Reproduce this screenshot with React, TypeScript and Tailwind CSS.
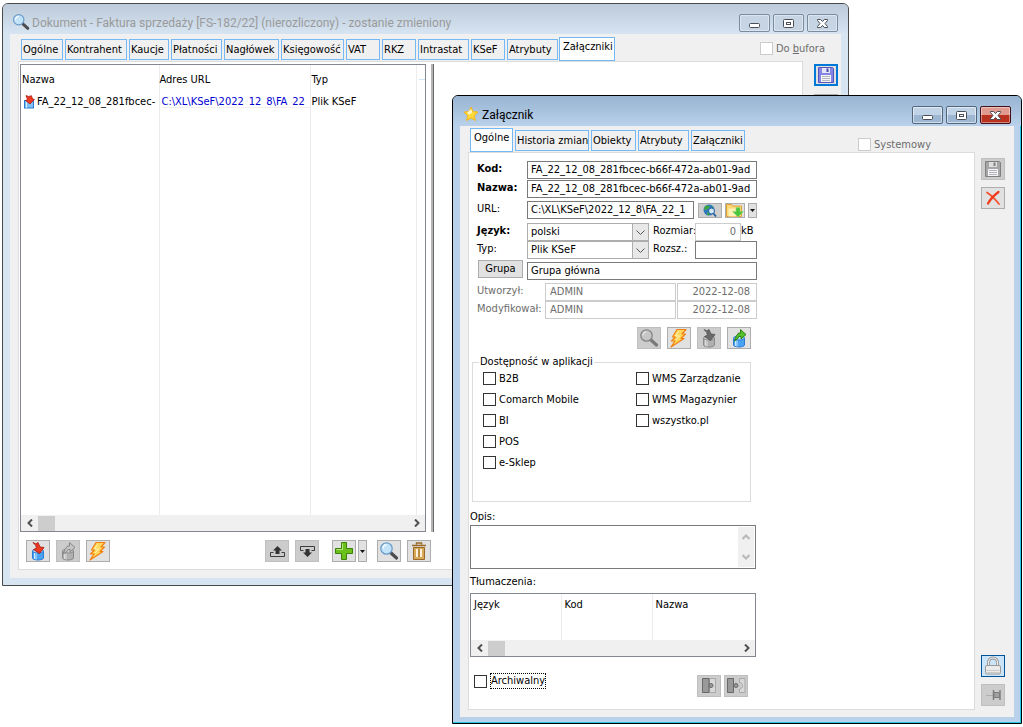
import { useState } from "react";
import type { ReactNode } from "react";
import clsx from "clsx";

interface TabDef {
  label: string;
  width: string;
}

const documentTabs: TabDef[] = [
  { label: "Ogólne", width: "w-[42px]" },
  { label: "Kontrahent", width: "w-[62px]" },
  { label: "Kaucje", width: "w-[40px]" },
  { label: "Płatności", width: "w-[51px]" },
  { label: "Nagłówek", width: "w-[55px]" },
  { label: "Księgowość", width: "w-[63px]" },
  { label: "VAT", width: "w-[34px]" },
  { label: "RKZ", width: "w-[34px]" },
  { label: "Intrastat", width: "w-[51px]" },
  { label: "KSeF", width: "w-[34px]" },
  { label: "Atrybuty", width: "w-[51px]" },
  { label: "Załączniki", width: "w-[56px]" },
];

const attachmentTabs: TabDef[] = [
  { label: "Ogólne", width: "w-[43px]" },
  { label: "Historia zmian", width: "w-[74px]" },
  { label: "Obiekty", width: "w-[45px]" },
  { label: "Atrybuty", width: "w-[51px]" },
  { label: "Załączniki", width: "w-[54px]" },
];

const appsLeft = ["B2B", "Comarch Mobile", "BI", "POS", "e-Sklep"];
const appsRight = ["WMS Zarządzanie", "WMS Magazynier", "wszystko.pl"];

export default function App() {
  return (
    <main className="grid min-h-screen bg-white font-['DejaVu_Sans_Condensed','DejaVu_Sans',sans-serif] text-[11px] leading-[14px] text-black">
      <DocumentWindow />
      <AttachmentWindow />
    </main>
  );
}

/* ---------- Windows ---------- */

function DocumentWindow() {
  const [tab, setTab] = useState("Załączniki");

  return (
    <section className="col-start-1 row-start-1 mt-[3px] mr-[174px] mb-[141px] ml-[2px] flex flex-col rounded-t-md border border-[#4a4a4a] bg-[#d7e4f2] px-[7px] pb-[7px]">
      <TitleBar
        icon={<MagnifierIcon className="size-5 shrink-0" />}
        title="Dokument - Faktura sprzedaży [FS-182/22] (nierozliczony) - zostanie zmieniony"
      />
      <div className="flex flex-1 flex-col bg-[#f0f0f0]">
        <div className="flex h-[27px] justify-between pl-[11px]">
          <Tabs tabs={documentTabs} active={tab} onChange={setTab} />
          <div className="mt-2 mr-4">
            <Check label={<>Do <u>b</u>ufora</>} disabled />
          </div>
        </div>

        <div className="mb-2 ml-2 flex flex-1">
          <div className="flex flex-1 flex-col border border-[#dcdcdc] bg-white pt-[2px] pb-[7px] pl-px">
            <div className="flex flex-1 gap-[5px]">
              <div className="flex w-[406px] flex-col border border-[#828790]">
                <FileTable />
                <ScrollBar />
              </div>
              <div className="w-[3px] border-r border-[#696969] bg-[#b4b4b4]" />
            </div>

            <div className="mt-2 flex w-[411px] pl-1.5">
              <div className="flex gap-1.5">
                <ToolButton title="Importuj"><DbInIcon /></ToolButton>
                <ToolButton title="Eksportuj" disabled><DbOutIcon muted /></ToolButton>
                <ToolButton title="Uruchom"><BoltIcon /></ToolButton>
              </div>
              <div className="ml-auto flex gap-1.5">
                <ToolButton title="W górę" disabled><TrayUpIcon /></ToolButton>
                <ToolButton title="W dół" disabled><TrayDownIcon /></ToolButton>
              </div>
              <div className="mr-[10px] ml-[13px] flex gap-0.5">
                <ToolButton title="Dodaj"><PlusIcon /></ToolButton>
                <DropButton title="Więcej opcji dodawania" />
              </div>
              <div className="flex gap-1.5">
                <ToolButton title="Podgląd"><MagnifierIcon /></ToolButton>
                <ToolButton title="Usuń"><TrashIcon /></ToolButton>
              </div>
            </div>
          </div>

          <div className="flex flex-col gap-2 pt-[3px] pr-[3px] pl-[11px]">
            <button title="Zapisz" className="flex h-[22px] w-6 items-center justify-center bg-[#e1e1e1] ring-2 ring-[#0078d7] ring-inset">
              <FloppyIcon />
            </button>
            <button title="Zamknij" className="h-[22px] w-6 border border-[#adadad] bg-[#cccccc]" />
          </div>
        </div>
      </div>
    </section>
  );
}

function AttachmentWindow() {
  const [tab, setTab] = useState("Ogólne");

  return (
    <section className="z-10 col-start-1 row-start-1 mt-[95px] mr-px mb-[3px] ml-[452px] flex flex-col rounded-t-md border border-black bg-[#b9d1ea] px-[7px] pb-[6px] shadow-[inset_-1px_-1px_0_#26c9ea]">
      <TitleBar icon={<StarIcon />} title="Załącznik" focused />
      <div className="flex flex-1 flex-col bg-[#f0f0f0]">
        <div className="flex h-[26px] justify-between pl-[11px]">
          <div className="-mt-px">
            <Tabs tabs={attachmentTabs} active={tab} onChange={setTab} />
          </div>
          <div className="mt-3 mr-[83px]">
            <Check label="Systemowy" disabled />
          </div>
        </div>

        <div className="mb-[7px] ml-2 flex flex-1">
          <div className="flex-1 border border-[#dcdcdc] bg-white pt-2 pb-[11px]">
            <AttachmentForm />
          </div>
          <div className="flex flex-col gap-[7px] pt-1.5 pr-[9px] pb-1 pl-1.5">
            <ToolButton title="Zapisz" disabled><FloppyIcon muted /></ToolButton>
            <ToolButton title="Anuluj"><CrossIcon /></ToolButton>
            <button title="Blokada" className="mt-auto h-[22px] w-6 border border-[#005499] bg-[#cce4f7]">
              <LockIcon />
            </button>
            <ToolButton title="Przypnij" disabled><PinIcon /></ToolButton>
          </div>
        </div>
      </div>
    </section>
  );
}

function AttachmentForm() {
  return (
    <form className="w-[288px]" onSubmit={(e) => e.preventDefault()}>
      <div className="pl-2">
        <Row id="kod" label="Kod:" bold>
          <Field id="kod" value="FA_22_12_08_281fbcec-b66f-472a-ab01-9ad" />
        </Row>
        <div className="mt-px">
          <Row id="nazwa" label="Nazwa:" bold>
            <Field id="nazwa" value="FA_22_12_08_281fbcec-b66f-472a-ab01-9ad" />
          </Row>
        </div>
        <div className="mt-[3px]">
          <Row id="url" label="URL:">
            <Field id="url" value="C:\XL\KSeF\2022_12_8\FA_22_1" />
            <div className="flex shrink-0 items-center gap-[3px] pl-1">
              <button type="button" title="Otwórz adres" className="h-[15px] w-6 border border-[#adadad] bg-[#cfcfcf]"><GlobeIcon /></button>
              <button type="button" title="Wybierz plik" className="h-[15px] w-5 border border-[#adadad] bg-[#e1e1e1]"><FolderIcon /></button>
              <button type="button" title="Opcje pliku" className="flex h-[15px] w-[9px] items-center justify-center border border-[#adadad] bg-[#e1e1e1]"><Caret /></button>
            </div>
          </Row>
        </div>

        <div className="mt-1 flex">
          <div className="w-[172px]">
            <Row id="jezyk" label="Język:" bold><Select id="jezyk" value="polski" /></Row>
            <Row id="typ" label="Typ:"><Select id="typ" value="Plik KSeF" /></Row>
          </div>
          <div className="flex-1 pl-1 leading-[16px]">
            <div className="flex h-[18px]">
              <label htmlFor="rozmiar" className="w-[42px]">Rozmiar:</label>
              <input id="rozmiar" disabled defaultValue="0" className="w-[46px] min-w-0 border border-[#cccccc] bg-white px-1 text-right text-[#6d6d6d]" />
              <span>kB</span>
            </div>
            <div className="flex h-[18px]">
              <label htmlFor="rozsz" className="w-[42px]">Rozsz.:</label>
              <input id="rozsz" className="w-[62px] min-w-0 border border-[#7a7a7a] bg-white px-1" />
            </div>
          </div>
        </div>

        <div className="mt-[3px] flex h-[18px]">
          <div className="w-[50px] shrink-0 pl-px">
            <button type="button" className="-mt-[3px] h-[18px] w-[45px] border border-[#adadad] bg-[#e1e1e1]">Grupa</button>
          </div>
          <input aria-label="Grupa" defaultValue="Grupa główna" className="min-w-0 flex-1 border border-[#7a7a7a] bg-white px-[3px]" />
        </div>

        <div className="mt-[3px]">
          <AuditRow id="utworzyl" label="Utworzył:" user="ADMIN" date="2022-12-08" />
          <AuditRow id="modyfikowal" label="Modyfikował:" user="ADMIN" date="2022-12-08" />
        </div>

        <div className="mt-2 mr-1.5 flex justify-end gap-1.5">
          <ToolButton title="Podgląd" disabled><MagnifierIcon muted /></ToolButton>
          <ToolButton title="Uruchom"><BoltIcon /></ToolButton>
          <ToolButton title="Importuj" disabled><DbInIcon muted /></ToolButton>
          <ToolButton title="Eksportuj"><DbOutIcon /></ToolButton>
        </div>
      </div>

      <fieldset className="mt-1.5 mr-1.5 ml-[3px] flex h-[147px] border border-[#dcdcdc] pt-[3px] pl-[10px]">
        <legend className="-ml-1 px-px whitespace-nowrap">Dostępność w aplikacji</legend>
        <div className="flex w-[153px] flex-col gap-2">
          {appsLeft.map((app) => <Check key={app} label={app} />)}
        </div>
        <div className="flex flex-col gap-2">
          {appsRight.map((app) => <Check key={app} label={app} />)}
        </div>
      </fieldset>

      <div className="pl-px">
        <label htmlFor="opis" className="mt-2 block">Opis:</label>
        <div className="mt-px flex h-[44px] w-[286px] border border-[#7a7a7a] p-px">
          <textarea id="opis" className="min-w-0 flex-1 resize-none overflow-hidden px-1 outline-none" />
          <div className="flex w-4 flex-col items-center justify-between bg-[#f0f0f0] py-1.5">
            <Chevron dir="up" muted />
            <Chevron dir="down" muted />
          </div>
        </div>

        <p className="mt-1.5">Tłumaczenia:</p>
        <div className="mt-1 flex h-16 w-[286px] flex-col border border-[#828790]">
          <table className="h-[47px] w-full table-fixed text-left">
            <thead>
              <tr>
                <th className="w-[90px] border-r border-[#ececec] px-[3px] pt-1 align-top font-normal">Język</th>
                <th className="w-[91px] border-r border-[#ececec] px-[3px] pt-1 align-top font-normal">Kod</th>
                <th className="px-[3px] pt-1 align-top font-normal">Nazwa</th>
              </tr>
            </thead>
          </table>
          <ScrollBar />
        </div>

        <div className="mt-4 flex items-start justify-between pr-[9px] pl-1">
          <label className="flex items-center gap-[3px]">
            <input type="checkbox" className="size-[13px] appearance-none border border-[#333333] bg-white checked:bg-[#333333]" />
            <span className="border border-dotted border-black">Archiwalny</span>
          </label>
          <div className="mt-0.5 flex gap-[3px]">
            <ToolButton title="Połącz" disabled><PuzzleIcon /></ToolButton>
            <ToolButton title="Rozłącz" disabled><PuzzleIcon apart /></ToolButton>
          </div>
        </div>
      </div>
    </form>
  );
}

function FileTable() {
  return (
    <div className="flex flex-1 flex-col">
      <table className="h-full w-full flex-1 table-fixed text-left">
        <thead>
          <tr className="h-[29px]">
            <th className="w-[138px] border-r border-[#ececec] pl-px font-normal">Nazwa</th>
            <th className="w-[151px] border-r border-[#ececec] font-normal">Adres URL</th>
            <th className="w-[106px] border-r border-[#ececec] pl-px font-normal">Typ</th>
            <th><div className="ml-0.5 h-px bg-[#cce8f8]" /></th>
          </tr>
        </thead>
        <tbody>
          <tr className="h-[16px]">
            <td className="border-r border-[#ececec]">
              <div className="flex items-center gap-0.5 pl-0.5 whitespace-nowrap">
                <SmallDbIcon />
                FA_22_12_08_281fbcec-
              </div>
            </td>
            <td className="border-r border-[#ececec] pl-0.5 align-top">
              <div className="h-[14px] overflow-hidden border-b border-[#f0f0f0] leading-[16px] text-[#0000d0]">
                <a href="#plik" className="block whitespace-nowrap">C:\XL\KSeF\2022_12_8\FA_22</a>
              </div>
            </td>
            <td className="border-r border-[#ececec] pl-px">Plik KSeF</td>
            <td />
          </tr>
          <tr>
            <td className="border-r border-[#ececec]" />
            <td className="border-r border-[#ececec]" />
            <td className="border-r border-[#ececec]" />
            <td />
          </tr>
        </tbody>
      </table>
    </div>
  );
}

/* ---------- Shared pieces ---------- */

function TitleBar({ icon, title, focused }: { icon: ReactNode; title: string; focused?: boolean }) {
  return (
    <header
      className={clsx(
        "-mx-[7px] flex h-[30px] items-center rounded-t-[5px] bg-linear-to-b px-[10px]",
        focused ? "from-[#98b4d2] to-[#b9d1ea]" : "from-[#bccad9] to-[#d7e4f2]"
      )}
    >
      <div className="mt-1.5 flex size-4 items-center justify-center">{icon}</div>
      <h1
        className={clsx(
          "mt-2 ml-[3px] flex-1 font-['Roboto','Open_Sans',sans-serif] text-[12px] whitespace-nowrap",
          focused ? "text-black" : "text-[#9a9a9a]"
        )}
      >
        {title}
      </h1>
      <div className="mt-2 flex gap-[3px]">
        <WindowButton kind="min" focused={focused} />
        <WindowButton kind="max" focused={focused} />
        <WindowButton kind="close" focused={focused} />
      </div>
    </header>
  );
}

function WindowButton({ kind, focused }: { kind: "min" | "max" | "close"; focused?: boolean }) {
  const red = focused && kind === "close";
  return (
    <button
      title={kind === "min" ? "Minimalizuj" : kind === "max" ? "Maksymalizuj" : "Zamknij"}
      className={clsx(
        "flex h-[18px] w-[31px] items-center justify-center rounded-[2px] border inset-ring",
        red && "border-[#43101a] bg-linear-to-b from-[#e09a90] from-50% to-[#b8321f] to-50% inset-ring-[#ffffff66]",
        !red && focused && "border-[#52667e] bg-linear-to-b from-[#c1d3e7] from-50% to-[#9db7d3] to-50% inset-ring-[#ffffff88]",
        !red && !focused && "border-[#7b8ba0] bg-[#c6d4e3] inset-ring-[#ffffff66]"
      )}
    >
      <svg viewBox="0 0 13 11" className="h-[11px] w-[13px]" fill="#fff" stroke="#4a4f57">
        {kind === "min" && <rect x="1.5" y="5.5" width="10" height="4" rx="1" />}
        {kind === "max" && (
          <>
            <rect x="1.5" y="1.5" width="10" height="8" rx="1" />
            <rect x="4.5" y="4.5" width="4" height="2" />
          </>
        )}
        {kind === "close" && (
          <path d="M1.5 1.5h3.2L6.5 3.6 8.3 1.5h3.2v1L9 5.5l2.5 3v1H8.3L6.5 7.4 4.7 9.5H1.5v-1L4 5.5l-2.5-3z" />
        )}
      </svg>
    </button>
  );
}

function Tabs({ tabs, active, onChange }: { tabs: TabDef[]; active: string; onChange: (label: string) => void }) {
  return (
    <nav className="flex gap-0.5 whitespace-nowrap">
      {tabs.map((tab) => (
        <button
          key={tab.label}
          onClick={() => onChange(tab.label)}
          className={clsx(
            "shrink-0 border border-[#74b9f6] text-left",
            tab.width,
            tab.label === active ? "mt-[3px] -ml-px h-6 bg-white pb-1 pl-[3px]" : "mt-[5px] h-[21px] bg-[#f0f0f0] pl-px"
          )}
        >
          {tab.label}
        </button>
      ))}
    </nav>
  );
}

function Check({ label, disabled }: { label: ReactNode; disabled?: boolean }) {
  return (
    <label className={clsx("flex h-[13px] items-center gap-[3px] whitespace-nowrap", disabled && "text-[#6d6d6d]")}>
      <input
        type="checkbox"
        disabled={disabled}
        className="size-[13px] appearance-none border border-[#333333] bg-white checked:bg-[#333333] disabled:border-[#cccccc]"
      />
      <span>{label}</span>
    </label>
  );
}

function Row({ id, label, bold, children }: { id: string; label: string; bold?: boolean; children: ReactNode }) {
  return (
    <div className="flex h-[18px]">
      <label htmlFor={id} className={clsx("w-[50px] shrink-0 leading-[16px]", bold && "font-bold")}>{label}</label>
      {children}
    </div>
  );
}

function Field({ id, value }: { id: string; value: string }) {
  return <input id={id} defaultValue={value} className="min-w-0 flex-1 border border-[#7a7a7a] bg-white px-[3px]" />;
}

function Select({ id, value }: { id: string; value: string }) {
  return (
    <div className="relative flex-1">
      <select id={id} className="h-[18px] w-full appearance-none border border-[#adadad] bg-white pl-[3px]">
        <option>{value}</option>
      </select>
      <div className="pointer-events-none absolute inset-y-0 right-0 flex w-[17px] items-center justify-center border border-[#adadad] bg-[#e8e8e8]">
        <svg viewBox="0 0 9 5" className="h-[5px] w-[9px]" fill="none" stroke="#555">
          <path d="M.5.5l4 4 4-4" />
        </svg>
      </div>
    </div>
  );
}

function AuditRow({ id, label, user, date }: { id: string; label: string; user: string; date: string }) {
  return (
    <div className="flex h-[18px] gap-px text-[#6d6d6d]">
      <label htmlFor={id} className="w-[67px] shrink-0 leading-[16px] whitespace-nowrap">{label}</label>
      <input id={id} disabled defaultValue={user} className="min-w-0 flex-1 border border-[#cccccc] bg-white px-1" />
      <input aria-label={`${label} data`} disabled defaultValue={date} className="w-[80px] border border-[#cccccc] bg-white px-1.5 text-right" />
    </div>
  );
}

function ToolButton({ title, disabled, children }: { title: string; disabled?: boolean; children: ReactNode }) {
  return (
    <button
      type="button"
      title={title}
      disabled={disabled}
      className="h-[22px] w-6 border border-[#adadad] bg-[#e1e1e1] disabled:border-[#bfbfbf] disabled:bg-[#cccccc]"
    >
      {children}
    </button>
  );
}

function DropButton({ title }: { title: string }) {
  return (
    <button type="button" title={title} className="flex h-[22px] w-[9px] items-center justify-center border border-[#adadad] bg-[#e1e1e1]">
      <Caret />
    </button>
  );
}

function ScrollBar() {
  return (
    <div className="flex h-4 items-center bg-[#f0f0f0]">
      <div className="flex w-[17px] justify-center"><Chevron dir="left" /></div>
      <div className="h-[15px] w-[17px] bg-[#cdcdcd]" />
      <div className="ml-auto flex w-[17px] justify-center"><Chevron dir="right" /></div>
    </div>
  );
}

/* ---------- Icons ---------- */

function Chevron({ dir, muted }: { dir: "up" | "down" | "left" | "right"; muted?: boolean }) {
  const paths = {
    up: "M.5 6L4 2.500 7.500 6",
    down: "M.5 2L4 5.500 7.500 2",
    left: "M6 .5L2.500 4 6 7.500",
    right: "M2 .5L5.500 4 2 7.500",
  };
  return (
    <svg viewBox="0 0 8 8" className="size-2" fill="none" stroke={muted ? "#b8b8b8" : "#505050"} strokeWidth="2">
      <path d={paths[dir]} />
    </svg>
  );
}

function Caret() {
  return (
    <svg viewBox="0 0 5 3" className="h-[3px] w-[5px] shrink-0">
      <path d="M0 0h5L2.5 3z" fill="#111" />
    </svg>
  );
}

function Icon({ children, className = "h-5 w-[22px]" }: { children: ReactNode; className?: string }) {
  return (
    <svg viewBox="1 1 22 20" className={clsx("block", className)} fill="none">
      {children}
    </svg>
  );
}

function Cylinder({ muted }: { muted?: boolean }) {
  return (
    <>
      <path d="M6.500 11v7c0 1 2.500 2 5.500 2s5.500-1 5.500-2v-7z" fill={muted ? "#b0b0b0" : "#4aa3f2"} stroke={muted ? "#8a8a8a" : "#2a7bd6"} />
      <path d="M8.500 13v6M10 13v6.500" stroke={muted ? "#dcdcdc" : "#c8e8ff"} />
      <ellipse cx="12" cy="11" rx="5.500" ry="2" fill={muted ? "#cfcfcf" : "#b9defb"} stroke={muted ? "#8a8a8a" : "#2a7bd6"} />
    </>
  );
}

function DbInIcon({ muted }: { muted?: boolean }) {
  return (
    <Icon>
      <Cylinder muted={muted} />
      <path d="M7 2.500l3 1.500 2-1.500 2 4.500 4 .5-4.500 6-6-4 3-1.200-.8-3z" fill={muted ? "#6a6a6a" : "#ef3a22"} stroke={muted ? "#505050" : "#a51208"} strokeWidth=".8" />
    </Icon>
  );
}

function DbOutIcon({ muted }: { muted?: boolean }) {
  return (
    <Icon>
      <Cylinder muted={muted} />
      <path d="M7.500 14l1.500-4.500 2.500-3.500h2V2.500l5.500 5-5 4.500V9.500h-2l-1.500 2.500z" fill={muted ? "#c4c4c4" : "#52c02a"} stroke={muted ? "#808080" : "#26770c"} strokeWidth=".9" />
    </Icon>
  );
}

function SmallDbIcon() {
  return (
    <svg viewBox="0 0 12 14" className="h-[14px] w-3 shrink-0" fill="none">
      <rect x="1.500" y="5.500" width="9" height="7.500" fill="#7fc0f5" stroke="#2a78cc" />
      <path d="M3.500 7v6" stroke="#d5edff" />
      <path d="M3 .5l2.500 1 3-.8 1 3.300 2 .3L7 9 2.500 5.500l2-.7z" fill="#ef3a22" stroke="#a51208" strokeWidth=".7" />
    </svg>
  );
}

function BoltIcon() {
  return (
    <Icon>
      <path d="M10 2.500h9l-4 4.500h3.500L14 11.500h3L4 20l4-6H4.500L8.500 10H5.500z" fill="#ffd75a" stroke="#f08010" strokeWidth="1.200" strokeLinejoin="round" />
      <path d="M11.500 4.500L8.500 9h4L9 13" stroke="#fff3b8" />
    </Icon>
  );
}

function TrayUpIcon() {
  return (
    <Icon>
      <path d="M8.500 12.500H5.500v4h14v-4h-3" stroke="#3c3c3c" />
      <path d="M12.500 6l4.500 4.500h-2.500V14h-4v-3.500H8z" fill="#333" />
    </Icon>
  );
}

function TrayDownIcon() {
  return (
    <Icon>
      <path d="M8.500 10.500H5.500v-4h14v4h-3" stroke="#3c3c3c" />
      <path d="M12.500 17l4.500-4.500h-2.500V9h-4v3.500H8z" fill="#333" />
    </Icon>
  );
}

function PlusIcon() {
  return (
    <Icon>
      <path d="M9.500 2.500h5v6h6v5h-6v6h-5v-6h-6v-5h6z" fill="#6cc01c" stroke="#3b8208" />
      <path d="M10.500 3.500v6h-6" stroke="#b5e67c" />
    </Icon>
  );
}

function MagnifierIcon({ muted, className }: { muted?: boolean; className?: string }) {
  return (
    <Icon className={className}>
      <path d="M14 13l5.500 5" stroke={muted ? "#7a7a7a" : "#4b4b50"} strokeWidth="3.200" strokeLinecap="round" />
      <circle cx="9.500" cy="8.500" r="5.700" fill={muted ? "#c6c6c6" : "#c3e3fb"} stroke={muted ? "#858585" : "#6a9cc8"} strokeWidth="1.300" />
      <path d="M6 8.500a3.600 3.600 0 013.500-3.600" stroke="#fff" strokeWidth="1.200" strokeOpacity={muted ? 0.5 : 1} />
    </Icon>
  );
}

function TrashIcon() {
  return (
    <Icon>
      <path d="M9.500 4.500V3h5v1.500M5 5.500h14" stroke="#9a6a28" strokeWidth="1.500" />
      <path d="M6.500 7.500h11v12h-11z" fill="#d9a758" stroke="#9a6a28" />
      <path d="M10 9v8M14 9v8" stroke="#fff2d8" strokeWidth="2" />
      <path d="M12 9v8" stroke="#9a6a28" />
    </Icon>
  );
}

function FloppyIcon({ muted }: { muted?: boolean }) {
  return (
    <Icon>
      <path d="M4.500 3.500h14l1 1v14h-15z" fill={muted ? "#a6a6a6" : "#8585e6"} stroke={muted ? "#808080" : "#5555bb"} />
      <path d="M8 4h8v5H8z" fill={muted ? "#dedede" : "#e3e6fb"} />
      <path d="M12.500 4.500h2V8h-2z" fill={muted ? "#808080" : "#4747ac"} />
      <path d="M7 11h10v7H7z" fill="#f4f4f8" />
      <path d="M8 12.500h8M8 14.500h8M8 16.500h8" stroke="#b5b5bd" />
    </Icon>
  );
}

function CrossIcon() {
  return (
    <Icon>
      <path d="M6 5.500c4 2.500 8 6.500 12 11.500" stroke="#f4512f" strokeWidth="1.800" strokeLinecap="round" />
      <path d="M17.500 5c-4 3-8 7-10.500 11.500" stroke="#f03a1c" strokeWidth="2.200" strokeLinecap="round" />
    </Icon>
  );
}

function LockIcon() {
  return (
    <Icon>
      <path d="M7.500 11V7.500a4.500 4.500 0 019 0V11" stroke="#9a9a9a" strokeWidth="3" />
      <path d="M7.500 11V7.500a4.500 4.500 0 019 0V11" stroke="#ececec" strokeWidth="1.200" />
      <rect x="4.500" y="10.500" width="15" height="8.500" rx="1.500" fill="#ebebeb" stroke="#9a9a9a" />
      <path d="M5.500 15.500h13M5.500 17.500h13" stroke="#cacaca" />
    </Icon>
  );
}

function PinIcon() {
  return (
    <Icon>
      <path d="M5 11.500h7" stroke="#b0b0b0" />
      <path d="M12.500 6v10M19 6v10" stroke="#7d7d7d" strokeWidth="1.500" />
      <path d="M13 8.500h5.500v5H13z" fill="#a0a0a0" stroke="#7d7d7d" />
    </Icon>
  );
}

function PuzzleIcon({ apart }: { apart?: boolean }) {
  return (
    <Icon>
      <path
        d={apart ? "M15.500 3.500h5.500v14h-5.500v-3.500c4 0 4-6.500 0-6.500z" : "M12.500 3.500h6v14h-6z"}
        fill="#d8d8d8"
        stroke="#a8a8a8"
      />
      <path d={apart ? "M3.500 3.500h6v14h-6z" : "M5.500 3.500h6.500v14H5.500z"} fill="#999" stroke="#696969" />
      <circle cx={apart ? 12 : 14} cy="10.500" r="2" fill="#999" stroke="#696969" />
    </Icon>
  );
}

function StarIcon() {
  return (
    <svg viewBox="0 0 16 16" className="size-4 shrink-0">
      <path d="M8 1l2 4.600 5 .5-3.700 3.400 1 5L8 12l-4.400 2.500 1-5L1 6.100l5-.5z" fill="#ffd93b" stroke="#f3b51c" strokeLinejoin="round" />
      <path d="M8 3l1.300 3.300L6.500 8.500 4 7z" fill="#fff6c4" />
    </svg>
  );
}

function GlobeIcon() {
  return (
    <svg viewBox="0 0 22 13" className="block h-[13px] w-[22px]" fill="none">
      <circle cx="10" cy="6" r="5.500" fill="#2d78c2" />
      <path d="M6 2.500c2-1.500 4-1.500 5 0L9 5 6.500 6 5 5zM8 8l3 1-1 2.500-2-1zM13 2l2 2.500-1.500.5z" fill="#3fa63c" />
      <circle cx="12.500" cy="7" r="3" fill="#cfe8fb" stroke="#235f98" />
      <path d="M14.500 9.500l2.500 3" stroke="#235f98" strokeWidth="1.800" />
    </svg>
  );
}

function FolderIcon() {
  return (
    <svg viewBox="0 0 18 13" className="block h-[13px] w-[18px]" fill="none">
      <path d="M.5 12.500V.5h5l1 1.500h9v10.500z" fill="#fbd876" stroke="#e0a030" />
      <path d="M2.500 4.500h8v8h-8z" fill="#fff0b5" />
      <path d="M10 3.500h4v4h3.500L12 13 6.500 7.500H10z" fill="#4cc43e" stroke="#8fdc7a" strokeWidth=".6" />
    </svg>
  );
}
